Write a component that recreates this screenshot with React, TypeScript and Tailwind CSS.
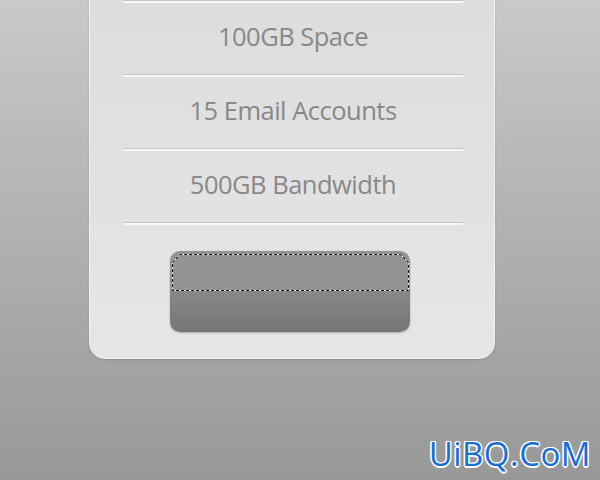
import React from "react";

const features = ["100GB Space", "15 Email Accounts", "500GB Bandwidth"];

function Divider() {
  return (
    <div className="flex flex-col">
      <div className="h-px bg-[#c4c4c4]" />
      <div className="h-[2px] bg-[#f7f7f7]" />
    </div>
  );
}

export default function App() {
  return (
    <div
      className="relative w-[600px] h-[480px] overflow-hidden bg-gradient-to-b from-[#c9c9c9] to-[#989898]"
      style={{ fontFamily: '"Open Sans", "Noto Sans", sans-serif' }}
    >
      <div className="ml-[89px] mt-[-30px] w-[406px] h-[389px] rounded-[16px] bg-gradient-to-b from-[#dcdcdc] to-[#e6e6e6] border border-[#f2f2f2] shadow-[0_1px_2px_rgba(0,0,0,0.15)] flex flex-col pt-[29px]">
        <div className="ml-[33px] mr-[31px] flex flex-col">
          <Divider />
          {features.map((f) => (
            <React.Fragment key={f}>
              <div className="h-[71px] flex items-center justify-center pb-[4px] text-[25.5px] tracking-[-0.5px] text-[#888888]">
                {f}
              </div>
              <Divider />
            </React.Fragment>
          ))}
        </div>
        <div className="mt-[26px] flex">
          <div className="ml-[80px] relative w-[240px] h-[81px] rounded-[10px] overflow-hidden shadow-[0_1px_2px_rgba(0,0,0,0.25)] flex flex-col">
            <div className="h-[39px] bg-[#939393]" />
            <div className="flex-1 bg-gradient-to-b from-[#888888] to-[#767676]" />
            <svg className="absolute left-0 top-0" width="240" height="81">
              <path
                d="M2.5 11.5 L10.5 3.5 L230.5 3.5 L238.5 11.5 L238.5 39.5 L2.5 39.5 Z"
                fill="none"
                stroke="#ffffff"
                strokeWidth="1"
              />
              <path
                d="M2.5 11.5 L10.5 3.5 L230.5 3.5 L238.5 11.5 L238.5 39.5 L2.5 39.5 Z"
                fill="none"
                stroke="#000000"
                strokeWidth="1"
                strokeDasharray="3 2"
              />
            </svg>
          </div>
        </div>
      </div>
      <div
        className="absolute right-[9px] bottom-[10px] text-[33px] leading-none text-[#1a6fd6] tracking-[0.5px]"
        style={{
          fontFamily: '"Open Sans", "Noto Sans", sans-serif',
          textShadow:
            "1.5px 0 0 #fff, -1.5px 0 0 #fff, 0 1.5px 0 #fff, 0 -1.5px 0 #fff, 1px 1px 0 #fff, -1px -1px 0 #fff, 1px -1px 0 #fff, -1px 1px 0 #fff",
        }}
      >
        UiBQ.CoM
      </div>
    </div>
  );
}
